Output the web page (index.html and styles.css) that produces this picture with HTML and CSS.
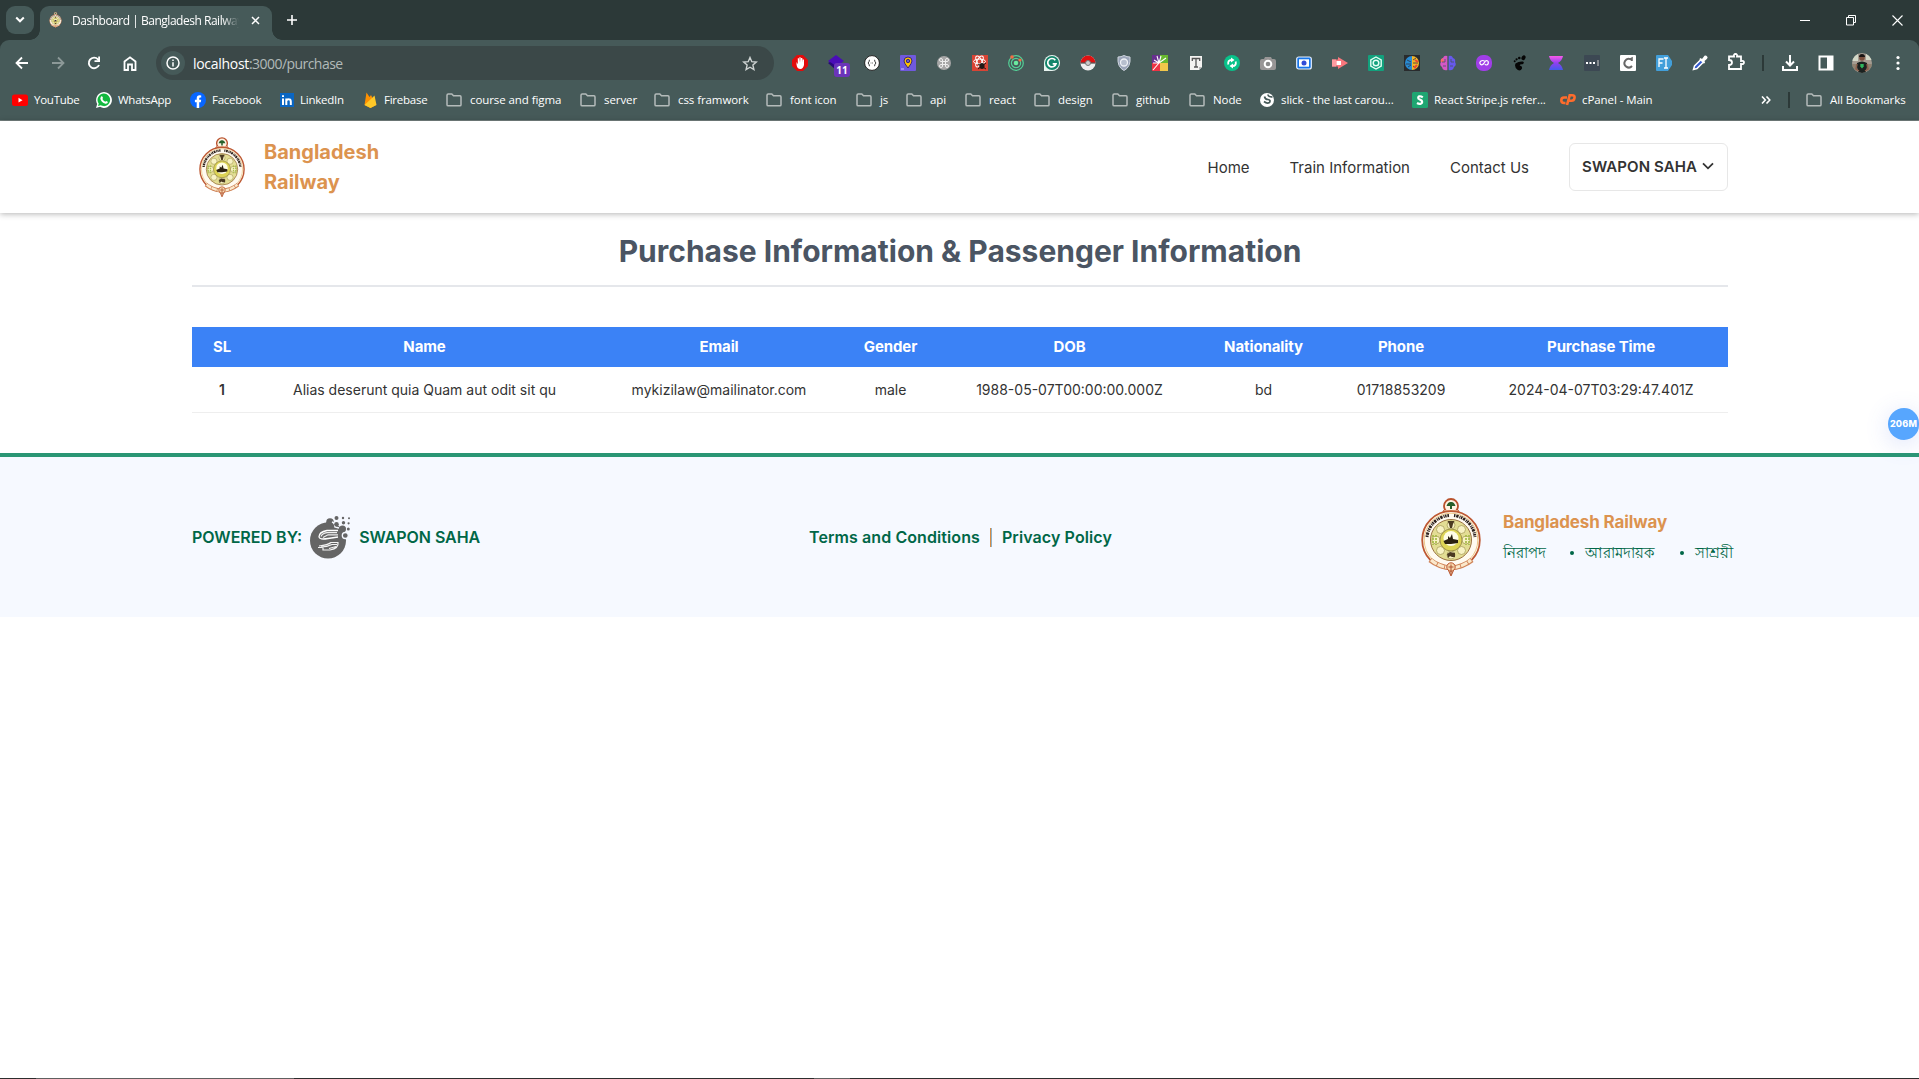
FILE: index.html
```html
<!DOCTYPE html>
<html lang="en">
<head>
<meta charset="utf-8">
<title>Dashboard | Bangladesh Railway</title>
<link rel="stylesheet" href="styles.css">
</head>
<body>
<svg class="defs" width="0" height="0" aria-hidden="true">
  <defs>
    <symbol id="folder" viewBox="0 0 16 14"><path d="M1 2.200Q1 1 2.200 1H5.800L7.500 2.800H14Q15 2.800 15 3.900V11.700Q15 12.800 14 12.800H2.100Q1 12.800 1 11.700Z" fill="none" stroke="#b4bbba" stroke-width="1.500"/></symbol>
    <symbol id="emblem" viewBox="0 0 60 78">
      <path d="M25 67L30 78L35 67Z" fill="#f3d3b5" stroke="#b9562f" stroke-width="1"/>
      <circle cx="30" cy="8" r="7" fill="#fff4e4" stroke="#b9522d" stroke-width="1.800"/>
      <path d="M23 12L20 17H40L37 12" fill="#e9b99a" stroke="#b9522d"/>
      <circle cx="30" cy="42" r="28.800" fill="#fffaf0" stroke="#bd5832" stroke-width="1.800"/>
      <circle cx="30" cy="42" r="26.800" fill="none" stroke="#e6bb70" stroke-width=".8"/>
      <path d="M6 39A24 24 0 0 1 28 17.500M33 17.500A24 24 0 0 1 54 39" fill="none" stroke="#2c211d" stroke-width="3" stroke-dasharray="1.500 .8 2.400 1 1 .6"/>
      <circle cx="30" cy="42" r="20.500" fill="#e3dd94" stroke="#9a7140" stroke-width="1"/>
      <g fill="#f8f2c4" stroke="#a99f5a" stroke-width=".8">
        <circle cx="30" cy="27" r="4"/><circle cx="40.500" cy="31.500" r="4"/><circle cx="45" cy="42" r="4"/><circle cx="40.500" cy="52.500" r="4"/><circle cx="30" cy="57" r="4"/><circle cx="19.500" cy="52.500" r="4"/><circle cx="15" cy="42" r="4"/><circle cx="19.500" cy="31.500" r="4"/>
      </g>
      <path d="M12 37V47M15 37V47M45 37V47M48 37V47" stroke="#a9bd4c" stroke-width="1.800" stroke-dasharray="2 1"/>
      <circle cx="30" cy="42" r="11" fill="#ddd455" stroke="#8f8146" stroke-width=".8"/>
      <circle cx="30" cy="40.500" r="7.500" fill="#fffde6"/>
      <path d="M22.500 43L27 41V38L29 40L31 36L32 41L37 42V45L30 46L24 46Z" fill="#2b2110"/>
      <path d="M26.500 23H33.500L32 26L31 30H29L28 26Z" fill="#4b3a22"/>
      <path d="M26 56L29 54L34 55V59H31L29 58L27 60Z" fill="#4b3a22"/>
      <path d="M25.500 8Q27 3.500 30 4Q33 3.500 34.500 8H31V11H29V8Z" fill="#27602b"/>
      <path d="M9 62Q18 69 30 70Q42 69 51 62" fill="none" stroke="#d08559" stroke-width="5"/>
      <path d="M10 62Q18 69 30 70Q42 69 50 62" fill="none" stroke="#fbe9cc" stroke-width="3" stroke-dasharray="7 1"/>
      <circle cx="30" cy="69" r="4.200" fill="#f8d9ae" stroke="#b9522d"/>
      <path d="M27.500 69H32.500M30 66.500V77" stroke="#ab512e"/>
    </symbol>
  </defs>
</svg>

<div class="browser">
  <div class="tabstrip">
    <button class="tab-search"><svg width="10" height="8" viewBox="0 0 10 8"><path d="M1.200 1.500L5 5.300L8.800 1.500" fill="none" stroke="#fff" stroke-width="2"/></svg></button>
    <div class="tab">
      <svg class="favicon" width="13" height="16"><use href="#emblem"/></svg>
      <span class="tab-title">Dashboard | Bangladesh Railway</span>
      <svg width="9" height="9" viewBox="0 0 9 9"><path d="M1 1L8 8M8 1L1 8" stroke="#fff" stroke-width="1.500"/></svg>
    </div>
    <svg class="new-tab" width="10" height="10" viewBox="0 0 10 10"><path d="M5 0V10M0 5H10" stroke="#fff" stroke-width="1.600"/></svg>
    <div class="window-controls">
      <svg width="10" height="11" viewBox="0 0 10 11"><path d="M0 5.500H10" stroke="#fff"/></svg>
      <svg width="10" height="11" viewBox="0 0 10 11"><path d="M.5 2.500H7.500V10H.5ZM2.500 2.500V.5H9.500V7.500H7.500" fill="none" stroke="#fff"/></svg>
      <svg width="11" height="11" viewBox="0 0 11 11"><path d="M.5 .5L10.500 10.500M10.500 .5L.5 10.500" stroke="#fff" stroke-width="1.100"/></svg>
    </div>
  </div>

  <div class="toolbar">
    <div class="nav-buttons">
      <svg width="14" height="14" viewBox="0 0 14 14"><path d="M13 7H2M7 1.500L1.500 7L7 12.500" fill="none" stroke="#fff" stroke-width="1.800"/></svg>
      <svg width="14" height="14" viewBox="0 0 14 14"><path d="M1 7H12M7 1.500L12.500 7L7 12.500" fill="none" stroke="#8c9998" stroke-width="1.800"/></svg>
      <svg width="14" height="14" viewBox="0 0 14 14"><path d="M12 9A5.300 5.300 0 1 1 11 3.300L12 4.500" fill="none" stroke="#fff" stroke-width="1.900"/><path d="M13 .5V6H7.500V4.200H11.200V.5Z" fill="#fff"/></svg>
      <svg width="14" height="15" viewBox="0 0 14 15"><path d="M1.500 14V5.500L7 1.300L12.500 5.500V14H9V8.500H5V14Z" fill="none" stroke="#fff" stroke-width="1.800"/></svg>
    </div>
    <div class="omnibox">
      <span class="site-info"><svg width="14" height="14" viewBox="0 0 14 14"><circle cx="7" cy="7" r="6" fill="none" stroke="#fff" stroke-width="1.500"/><path d="M7 6.300V10.500M7 3.400V5" stroke="#fff" stroke-width="1.500"/></svg></span>
      <span class="url"><b>localhost</b>:3000/purchase</span>
      <svg width="16" height="15" viewBox="0 0 16 15"><path d="M8 1.500L9.800 5.700L14.300 6.100L10.900 9.100L11.900 13.500L8 11.200L4.100 13.500L5.100 9.100L1.700 6.100L6.200 5.700Z" fill="none" stroke="#cfd4d3" stroke-width="1.400"/></svg>
    </div>
    <div class="extensions">
      <svg viewBox="0 0 16 16"><path d="M5 0H11L16 5V11L11 16H5L0 11V5Z" fill="#e30b0b"/><path d="M4.500 7V9.500Q5 14 8.500 14Q11 14 12 10V4.500H10.800V7.500L10.300 3H9V7.500L8.600 2.300H7.400V7.500L6.900 3.300H5.800V9.300Z" fill="#fff"/></svg>
      <span class="ext-badged"><svg viewBox="0 0 16 16"><path d="M8 0L16 6L8 12L0 6Z" fill="#4a0db8"/><path d="M0 8L2 7L8 11L8 15Z" fill="#27087a"/></svg><span class="badge">11</span></span>
      <svg viewBox="0 0 16 16"><circle cx="8" cy="8" r="7.400" fill="#fff" stroke="#222"/><path d="M6 5Q4.800 5 5 6.800L4 8L5 9.200Q4.800 11 6 11M10 5Q11.200 5 11 6.800L12 8L11 9.200Q11.200 11 10 11" fill="none" stroke="#222" stroke-width=".9"/><path d="M6.500 8H9.500" stroke="#777" stroke-dasharray="1 .5"/></svg>
      <svg viewBox="0 0 16 16"><rect width="16" height="16" rx="1" fill="#7059de"/><path d="M8 13Q4 8 4 6A4 4 0 0 1 12 6Q12 8 8 13Z" fill="#ffc400" stroke="#382879"/><circle cx="8" cy="6" r="1.700" fill="#6d59c0" stroke="#382879"/><path d="M1 14H4" stroke="#cbc3ff"/></svg>
      <svg viewBox="0 0 16 16"><circle cx="8" cy="8" r="7" fill="#a6a6a6"/><path d="M6.500 6.500H9.500V9.500H6.500ZM6.500 6.500H5A1.500 1.500 0 1 1 6.500 5ZM9.500 6.500V5A1.500 1.500 0 1 1 11 6.500ZM9.500 9.500H11A1.500 1.500 0 1 1 9.500 11ZM6.500 9.500V11A1.500 1.500 0 1 1 5 9.500Z" fill="none" stroke="#eee"/></svg>
      <svg viewBox="0 0 16 16"><rect width="16" height="16" fill="#d94435"/><g fill="none" stroke="#fff"><ellipse cx="7.500" cy="6.500" rx="6" ry="2.400"/><ellipse cx="7.500" cy="6.500" rx="6" ry="2.400" transform="rotate(60 7.500 6.500)"/><ellipse cx="7.500" cy="6.500" rx="6" ry="2.400" transform="rotate(120 7.500 6.500)"/></g><ellipse cx="10" cy="11" rx="2.600" ry="3" fill="#201816"/><path d="M6 9L14 14M6 14L14 8" stroke="#201816"/></svg>
      <svg viewBox="0 0 16 16"><g fill="none" stroke="#54cf96" stroke-width="1.200"><circle cx="8" cy="8" r="7.300"/><circle cx="8" cy="8" r="4.600"/></g><circle cx="8" cy="8" r="2.300" fill="#6bea9f"/><circle cx="4" cy="2" r="1.800" fill="#f36d45"/><circle cx="12" cy="5" r="1.600" fill="#f36d45"/></svg>
      <svg viewBox="0 0 16 16"><path d="M0 16V8A8 8 0 1 1 8 16Z" fill="#e8f4f0"/><circle cx="8" cy="8" r="7" fill="#13856b"/><path d="M11.300 5.200A4.200 4.200 0 1 0 12 8.800H8.700" fill="none" stroke="#fff" stroke-width="1.700"/></svg>
      <svg viewBox="0 0 16 16"><circle cx="8" cy="8" r="7.500" fill="#eee"/><path d="M.5 8A7.500 7.500 0 0 1 15.500 8Z" fill="#df1111"/><path d="M.5 8H15.500" stroke="#555" stroke-width="1.300"/><circle cx="8" cy="8" r="2.500" fill="#ccc" stroke="#777"/></svg>
      <svg viewBox="0 0 16 16"><path d="M8 .5Q11 2 14 2Q15 12 8 15.500Q1 12 2 2Q5 2 8 .5Z" fill="#9ba5b9" stroke="#cfd5df"/><circle cx="8" cy="7.500" r="3.500" fill="#b7bfce" stroke="#eef1f6" stroke-width="1.300"/></svg>
      <svg viewBox="0 0 16 16"><path d="M0 0H8V8H0Z" fill="#68308f"/><path d="M8 0H16V8H8Z" fill="#68b92f"/><path d="M0 8H8V16H0Z" fill="#ee3344"/><path d="M8 8H16V16H8Z" fill="#f1c74b"/><path d="M1 15L7 8L2 5M7 8L5 1M7 8L9 1M7 8L14 3M7 8H1" stroke="#fff" stroke-width="1.100" fill="none"/></svg>
      <svg viewBox="0 0 16 16"><path d="M2 1H14V12L11 15H2Z" fill="#f4f3f1"/><path d="M14 12H11V15Z" fill="#bbb"/><path d="M4.300 6V3.500H11.700V6M8 3.500V12M6 12H10" fill="none" stroke="#555" stroke-width="1.300"/></svg>
      <svg viewBox="0 0 16 16"><circle cx="8" cy="8" r="8" fill="#08c28a"/><path d="M4.300 9.500Q3.500 5 7.500 5M11.700 6.500Q12.500 11 8.500 11" fill="none" stroke="#fff" stroke-width="1.800"/><path d="M7 2.500L10.500 5L7 7.500ZM9 8.500L5.500 11L9 13.500Z" fill="#fff"/></svg>
      <svg viewBox="0 0 16 16"><path d="M5 2H11L12 4H14Q16 4 16 6V13Q16 15 14 15H2Q0 15 0 13V6Q0 4 2 4H4Z" fill="#989696"/><circle cx="8" cy="9" r="3.300" fill="#8a8a8a" stroke="#fff" stroke-width="2"/></svg>
      <svg viewBox="0 0 16 16"><rect x=".7" y="2" width="14.600" height="12" rx="2" fill="#1675e8" stroke="#e8f1ff" stroke-width="1.200"/><rect x="3" y="4.300" width="10" height="7.400" fill="#fff"/><circle cx="8" cy="8" r="2.500" fill="#304bd7"/></svg>
      <svg viewBox="0 0 16 16"><path d="M0 4.500H6V2L16 8L6 14V11.500H0Z" fill="#f9777d"/><path d="M0 4.500H4V11.500H0Z" fill="#ff9ba0"/><path d="M4.500 6H9V10H4.500Z" fill="#fff"/></svg>
      <svg viewBox="0 0 16 16"><rect width="16" height="16" rx="1" fill="#12a17d"/><path d="M8 2L13.200 5V11L8 14L2.800 11V5Z" fill="none" stroke="#e5fff4" stroke-width="1.400"/><circle cx="8" cy="8" r="2.800" fill="none" stroke="#e5fff4" stroke-width="1.500"/></svg>
      <svg viewBox="0 0 16 16"><rect width="16" height="16" fill="#292b2d"/><path d="M8 1A7 7 0 0 0 8 15Z" fill="#288bd2"/><path d="M8 1A7 7 0 0 1 8 15Z" fill="#f4b729"/><path d="M3 5L7 7M2 9H7M4 12L7 10M9 5L12 3M9 8H14M9 11L12 13" stroke="#2d3445" stroke-width=".8"/><path d="M11 5L14 7M10 13L13 10" stroke="#eb4934" stroke-width="2"/></svg>
      <svg viewBox="0 0 16 16"><path d="M7.300 1Q4 0 3 3Q0 4 1 7Q-1 10 2 12Q3 16 7.300 15Z" fill="#d657c6"/><path d="M3 3Q0 4 1 7L4 7Z" fill="#fb6b65"/><path d="M8.700 1Q12 0 13 3Q16 4 15 7Q17 10 14 12Q13 16 8.700 15Z" fill="#6659ec"/><path d="M2 7H5V4M3 11H6M14 7H11V4M13 11H10" fill="none" stroke="#47545f" stroke-width=".8"/></svg>
      <svg viewBox="0 0 16 16"><rect width="16" height="16" rx="7" fill="#a03ee8"/><path d="M8.500 6Q6.500 5 5 6Q3 7.500 4.500 9.300Q6.200 10.700 8 8.200L9.500 6Q11.500 5 12.300 7Q12.500 9.800 10.500 10Q9.500 10 8.800 9.200" fill="none" stroke="#fff" stroke-width="1.200"/></svg>
      <svg viewBox="0 0 16 16"><g fill="#050505"><ellipse cx="11.500" cy="2.700" rx="1.900" ry="2.500" transform="rotate(30 11.500 2.700)"/><circle cx="7.300" cy="3" r="1.300"/><circle cx="4.600" cy="4.300" r="1.100"/><circle cx="2.700" cy="6.300" r="1"/><path d="M3.500 8.500Q7 6 11 6.500Q13 8 10.500 9.300Q7.500 9 7.800 10.500Q10.500 11 10 13.500Q8.500 16.500 5.500 14.800Q2 12 3.500 8.500Z"/></g></svg>
      <svg viewBox="0 0 16 16"><defs><linearGradient id="hourglass" x2="0" y2="1"><stop stop-color="#f75bea"/><stop offset=".5" stop-color="#913ef0"/><stop offset="1" stop-color="#4359ec"/></linearGradient></defs><path d="M1 1H15Q14 6 10 8Q14 10 15 15H1Q2 10 6 8Q2 6 1 1Z" fill="url(#hourglass)"/></svg>
      <svg viewBox="0 0 16 16"><rect width="16" height="16" rx="1" fill="#3c4853"/><path d="M2 8H12" stroke="#fff" stroke-width="2" stroke-dasharray="2 1.500"/><path d="M14 5V11" stroke="#ccc"/></svg>
      <svg viewBox="0 0 16 16"><rect width="16" height="16" rx="1" fill="#fff"/><path d="M11.800 6V3.500L10.500 4.200A4.300 4.300 0 1 0 12 11" fill="none" stroke="#686868" stroke-width="2"/></svg>
      <svg viewBox="0 0 16 16"><path d="M1 0H12L16 6V10L12 16H1Q0 16 0 15V1Q0 0 1 0Z" fill="#429fda"/><path d="M3 12V4H7.500M3 8H6.500M8 3H12M10 3V13M8 13H12" fill="none" stroke="#fff" stroke-width="1.300"/></svg>
      <svg viewBox="0 0 16 16"><path d="M1.500 14.500L2.500 11L9 4.500L11.500 7L5 13.500Z" fill="#3359d0" stroke="#fff" stroke-width="1.500"/><path d="M8 3L10 4L12.500 .7Q14 0 15.500 2Q16 3.500 12.500 6L13 8L11.500 8.500L7.500 4.500Z" fill="#fff"/></svg>
      <svg viewBox="0 0 18 18"><path d="M2 3.500H7Q6.500 1 8.500 1Q10.500 1 10 3.500H14V8Q17 7.500 17 9.500Q17 11.500 14 11V16H2V12Q5 12 5 9.500Q5 7 2 7Z" fill="none" stroke="#fff" stroke-width="1.800"/></svg>
    </div>
    <span class="divider"></span>
    <div class="toolbar-end">
      <svg viewBox="0 0 16 16"><path d="M8 0V10M4 6.500L8 10.500L12 6.500M1 11V15H15V11" fill="none" stroke="#fff" stroke-width="2"/></svg>
      <svg viewBox="0 0 16 16"><rect x="1.500" y="1.500" width="13" height="13" fill="none" stroke="#fff" stroke-width="2"/><path d="M9 2H14V14H9Z" fill="#fff"/></svg>
      <svg class="avatar" viewBox="0 0 20 20"><defs><clipPath id="round"><circle cx="10" cy="10" r="10"/></clipPath></defs><g clip-path="url(#round)"><path d="M0 0H20V20H0Z" fill="#a59c91"/><path d="M0 0H6V8H0ZM14 0H20V7H14Z" fill="#d3d8c8"/><path d="M0 11H5V20H0ZM15 11H20V20H15Z" fill="#8f8170"/><path d="M5 10Q10 7 15 10V14L13.500 20H6.500L5 14Z" fill="#1b211f"/><path d="M5 11L4 16L7 18M15 11L16 16L13 18" fill="none" stroke="#8b5f4c" stroke-width="1.500"/><circle cx="10" cy="5" r="2.800" fill="#7b4f3c"/><path d="M7 4Q7 1 10 1Q13 1 13 4Z" fill="#191514"/><path d="M8.300 11H11.700V13.500L10 15.500L8.300 13.500Z" fill="#2fb65d"/></g></svg>
      <svg viewBox="0 0 16 16"><g fill="#fff"><circle cx="8" cy="2.500" r="1.600"/><circle cx="8" cy="8" r="1.600"/><circle cx="8" cy="13.500" r="1.600"/></g></svg>
    </div>
  </div>

  <div class="bookmarks">
    <a><svg viewBox="0 0 16 16"><rect y="2.500" width="16" height="11.500" rx="2.500" fill="#f00"/><path d="M6.500 5.800L10.500 8.200L6.500 10.600Z" fill="#fff"/></svg><span>YouTube</span></a>
    <a><svg viewBox="0 0 16 16"><path d="M0 16L1.200 12A7.900 7.900 0 1 1 4 14.800Z" fill="#fff"/><path d="M2 14L2.700 11.500A6.300 6.300 0 1 1 4.700 13.300Z" fill="#12b83e"/><path d="M5 4.500Q6.500 3.500 7 6L6.400 7Q7.500 9 9.300 9.700L10.200 8.900L12 10Q11.500 12 9.500 11.800Q5 10.500 4.300 6.500Z" fill="#fff"/></svg><span>WhatsApp</span></a>
    <a><svg viewBox="0 0 16 16"><circle cx="8" cy="8" r="8" fill="#0866ff"/><path d="M6.700 16V10.300H4.900V7.800H6.700V6.500Q6.700 3.200 9.700 3.200L11.200 3.400V5.500H10.200Q9.200 5.500 9.200 6.600V7.800H11.200L10.800 10.300H9.200V16Z" fill="#fff"/></svg><span>Facebook</span></a>
    <a><svg viewBox="0 0 16 16"><rect x="0" y="1" width="14" height="14" fill="#0a66c2"/><path d="M3 6.500V13M3 3.300V5.100M6.300 13V6.500M6.300 9Q7 7.200 8.700 7.300Q10.800 7.300 10.800 9.700V13" stroke="#fff" stroke-width="2" fill="none"/></svg><span>LinkedIn</span></a>
    <a><svg viewBox="0 0 16 16"><path d="M.5 13L2.500 .5L5.500 5L7 3L12 13L6.500 16Z" fill="#ff9100"/><path d="M.5 13L8 6L10.500 3.500L12.500 13L6.500 16Z" fill="#ffc928"/></svg><span>Firebase</span></a>
    <a><svg><use href="#folder"/></svg><span>course and figma</span></a>
    <a><svg><use href="#folder"/></svg><span>server</span></a>
    <a><svg><use href="#folder"/></svg><span>css framwork</span></a>
    <a><svg><use href="#folder"/></svg><span>font icon</span></a>
    <a><svg><use href="#folder"/></svg><span>js</span></a>
    <a><svg><use href="#folder"/></svg><span>api</span></a>
    <a><svg><use href="#folder"/></svg><span>react</span></a>
    <a><svg><use href="#folder"/></svg><span>design</span></a>
    <a><svg><use href="#folder"/></svg><span>github</span></a>
    <a><svg><use href="#folder"/></svg><span>Node</span></a>
    <a><svg viewBox="0 0 16 16"><circle cx="7" cy="8" r="7" fill="#fff"/><path d="M4.500 4.500Q5 7.500 8 7.500Q11 8 9.500 10.500Q7 12 4 9.500M8 2.500Q8 5 12.500 5" fill="none" stroke="#465a59" stroke-width="1.700"/></svg><span>slick - the last carou...</span></a>
    <a><svg viewBox="0 0 16 16"><rect width="16" height="16" rx="1.500" fill="#1fa672"/><path d="M10.800 5.300Q9 4 7.200 4.300Q5.700 5 6.500 6.600Q8 7.500 9.500 8.500Q11 10.500 9 11.600Q7 12.200 5 11" fill="none" stroke="#fff" stroke-width="2.200"/></svg><span>React Stripe.js refer...</span></a>
    <a><svg viewBox="0 0 16 16"><path d="M7 5.500H4Q1.300 5.500 1.300 8.300Q1.300 11 4 11H5.500M7 13L9.700 3.300H12Q15 3.300 14.500 6Q14 8.800 11.500 8.800H9" fill="none" stroke="#ff6c2c" stroke-width="2.600"/></svg><span>cPanel - Main</span></a>
    <svg class="more" viewBox="0 0 10 8"><path d="M1 .5L4.300 4L1 7.500M5.500 .5L8.800 4L5.500 7.500" fill="none" stroke="#fff" stroke-width="1.600"/></svg>
    <i class="divider"></i>
    <a><svg><use href="#folder"/></svg><span>All Bookmarks</span></a>
  </div>
</div>

<div class="page">
  <header class="site-header">
    <div class="container header-row">
      <a class="brand"><svg width="46" height="60"><use href="#emblem"/></svg><span>Bangladesh<br>Railway</span></a>
      <nav class="site-nav">
        <a>Home</a><a>Train Information</a><a>Contact Us</a>
        <button class="user-menu"><span>SWAPON SAHA</span><svg width="12" height="8" viewBox="0 0 12 8"><path d="M1 1.300L6 6.300L11 1.300" fill="none" stroke="#333" stroke-width="1.800"/></svg></button>
      </nav>
    </div>
  </header>

  <main class="container">
    <h1>Purchase Information &amp; Passenger Information</h1>
    <table>
      <colgroup><col class="c-sl"><col class="c-name"><col class="c-email"><col class="c-gender"><col class="c-dob"><col class="c-nat"><col class="c-phone"><col class="c-time"></colgroup>
      <thead><tr><th>SL</th><th>Name</th><th>Email</th><th>Gender</th><th>DOB</th><th>Nationality</th><th>Phone</th><th>Purchase Time</th></tr></thead>
      <tbody><tr><th>1</th><td>Alias deserunt quia Quam aut odit sit qu</td><td>mykizilaw@mailinator.com</td><td>male</td><td>1988-05-07T00:00:00.000Z</td><td>bd</td><td>01718853209</td><td>2024-04-07T03:29:47.401Z</td></tr></tbody>
    </table>
  </main>

  <footer class="site-footer">
    <div class="container footer-row">
      <div class="powered"><span>POWERED BY:</span>
        <svg width="41" height="43" viewBox="0 0 41 43"><g fill="#656565"><circle cx="18" cy="24.500" r="18"/><circle cx="20" cy="6" r="3.800"/><path d="M14 8L20 4L27 14L34 12L36 20L30 22Z"/><circle cx="32.500" cy="13" r="3.500"/></g><path d="M22 6Q25 7 25 11L29 12" stroke="#f6f9ff" stroke-width="1.500" fill="none"/><g fill="#656565"><circle cx="26.500" cy="2" r="2"/><circle cx="26.500" cy="8.200" r="2.300"/><circle cx="33" cy="2" r="1.200"/><circle cx="39" cy="2.300" r="1"/><circle cx="33.500" cy="6.800" r="1.700"/><circle cx="38.600" cy="7.300" r="1.100"/><circle cx="38.300" cy="13" r="1.500"/></g><circle cx="35.300" cy="19.500" r="3" fill="#656565" stroke="#f6f9ff" stroke-width="1.300"/><path d="M28 14.500H17Q9 16 9 21Q9.500 24 18 22.500L28 21" fill="none" stroke="#fff" stroke-width="1.400"/><path d="M27 16.700H17Q12 17.500 11 20.500M28 18.800H18L13 21.500" fill="none" stroke="#eee" stroke-width="1.200"/><path d="M9 30Q18 29 21 26.500H28Q29 32 20 34H13V31.500H8M27 28.500H22Q17 31 11 31M26 30.500L19 32.500" fill="none" stroke="#f3f3f3" stroke-width="1.200"/></svg>
        <span>SWAPON SAHA</span></div>
      <div class="legal"><a>Terms and Conditions</a><i></i><a>Privacy Policy</a></div>
      <div class="footer-brand">
        <svg width="60" height="78"><use href="#emblem"/></svg>
        <div><strong>Bangladesh Railway</strong>
          <ul><li>নিরাপদ</li><li>আরামদায়ক</li><li>সাশ্রয়ী</li></ul></div>
      </div>
    </div>
  </footer>
</div>
<div class="memory">206M</div>
<div class="taskbar"><i></i><i></i></div>
</body>
</html>
```
FILE: styles.css
```css
* { box-sizing: border-box; }
body { margin: 0; height: 1079px; overflow: hidden; background: #fff; color: #333; font-family: Inter, "Liberation Sans", sans-serif; position: relative; }
button { font: inherit; background: none; border: 0; padding: 0; }
svg { display: block; flex: none; }
.defs { position: absolute; }

.browser { height: 121px; background: #2c3938; border-bottom: 1px solid #74807f; font-family: "Open Sans", "Noto Sans", sans-serif; color: #fff; }
.tabstrip { height: 40px; display: flex; align-items: center; padding-left: 6px; }
.tab-search { width: 28px; height: 28px; border-radius: 9px; background: #465a59; display: grid; place-items: center; }
.tab { position: relative; width: 232px; height: 34px; margin: 6px 0 0 6px; border-radius: 9px 9px 0 0; background: #465a59; display: flex; align-items: center; padding: 0 12px 6px 9px; }
.tab::before, .tab::after { content: ""; position: absolute; bottom: 0; width: 10px; height: 10px; }
.tab::before { left: -10px; background: radial-gradient(circle at 0 0, transparent 9.5px, #465a59 10px); }
.tab::after { right: -10px; background: radial-gradient(circle at 100% 0, transparent 9.5px, #465a59 10px); }
.favicon { margin-right: 10px; }
.tab-title { flex: 1; margin-right: 12px; overflow: hidden; white-space: nowrap; font-size: 12px; letter-spacing: -.48px; mask-image: linear-gradient(90deg, #000 90%, transparent); }
.new-tab { margin-left: 15px; }
.window-controls { margin-left: auto; display: flex; gap: 36px; padding-right: 16px; }
.toolbar { height: 46px; background: #465a59; border-radius: 9px 9px 0 0; display: flex; align-items: center; padding-left: 15px; }
.nav-buttons { display: flex; gap: 22px; align-items: center; width: 141px; }
.omnibox { width: 618px; height: 34px; border-radius: 17px; background: #3b4848; display: flex; align-items: center; padding: 0 16px 0 5px; }
.site-info { width: 24px; height: 24px; border-radius: 50%; background: #465a59; display: grid; place-items: center; }
.url { flex: 1; margin-left: 8px; font-size: 14px; letter-spacing: -.55px; color: #b2bab9; }
.url b { font-weight: 400; letter-spacing: -.3px; color: #fff; }
.extensions { display: flex; gap: 20px; margin-left: 18px; align-items: center; }
.extensions svg, .toolbar-end svg { width: 16px; height: 16px; }
.extensions > svg:last-child { width: 18px; height: 18px; margin: -2px -1px 0; }
.ext-badged { position: relative; width: 16px; height: 16px; }
.badge { position: absolute; left: 6px; top: 8px; width: 16px; height: 14px; border-radius: 3px; background: #6b34b9; font: 700 10px/14px "Open Sans", sans-serif; text-align: center; }
.divider { width: 2px; height: 16px; background: #2c3938; }
.toolbar > .divider { margin-left: 18px; }
.toolbar-end { display: flex; align-items: center; gap: 20px; margin-left: 18px; }
.toolbar-end .avatar { width: 20px; height: 20px; margin: 0 -2px; }
.bookmarks { height: 34px; background: #465a59; padding: 0 0 6px 12px; display: grid; align-items: center; grid-template-columns: 84px 94px 90px 84px 82px 134px 74px 112px 90px 50px 59px 69px 78px 77px 71px 152px 148px 201px 27px 18px 110px; font-size: 11.500px; letter-spacing: -.08px; white-space: nowrap; }
.bookmarks a { display: flex; align-items: center; }
.bookmarks a:nth-child(-n+5) { letter-spacing: -.25px; }
.bookmarks a span { padding-bottom: 2px; }
.bookmarks a svg { width: 16px; height: 16px; margin-right: 6px; }
.bookmarks a:nth-child(4) svg, .bookmarks a:nth-child(5) svg { margin-right: 4px; }
.bookmarks a svg:has(use) { height: 14px; margin-right: 8px; }
.bookmarks a:nth-child(16) svg { margin-right: 5px; }
.bookmarks .more { width: 10px; height: 8px; }

.container { width: 1536px; margin-left: calc((100% - 1535px) / 2); }
.site-header { height: 92px; box-shadow: 0 1px 6px rgba(0,0,0,.3); }
.header-row { height: 92px; display: flex; justify-content: space-between; align-items: center; }
.brand { display: flex; align-items: center; gap: 19px; padding-left: 7px; color: #dc934f; font-weight: 700; font-size: 20px; line-height: 30px; }
.site-nav { display: flex; align-items: center; gap: 40px; font-size: 15px; }
.user-menu { width: 159px; height: 48px; border: 1px solid #e7e7e7; border-radius: 6px; display: flex; align-items: center; justify-content: center; gap: 5px; padding: 0 1px 2px 0; font-weight: 600; letter-spacing: .08px; color: #333; }
h1 { margin: 0; height: 74px; padding-top: 16px; border-bottom: 2px solid #e5e7eb; text-align: center; font-size: 30px; line-height: 44px; font-weight: 700; color: #4b5563; }
table { margin-top: 40px; width: 1536px; table-layout: fixed; border-spacing: 0; font-size: 14px; color: #333; text-align: center; }
th, td { padding: 0 0 0 1px; }
thead th { height: 40px; padding-bottom: 2px; background: #3b82f6; color: #fff; font-size: 15px; font-weight: 700; letter-spacing: -.1px; }
tbody th, tbody td { height: 46px; border-bottom: 1px solid #eee; }
tbody th { font-weight: 600; }
.c-sl { width: 59px; } .c-name { width: 346px; } .c-email { width: 243px; } .c-gender { width: 100px; }
.c-dob { width: 258px; } .c-nat { width: 130px; } .c-phone { width: 145px; } .c-time { width: 255px; }

.site-footer { margin-top: 40px; height: 164px; border-top: 4px solid #2a9674; background: #f6f9ff; color: #006747; }
.footer-row { height: 160px; display: grid; grid-template-columns: 617px 612px 307px; align-items: center; font-size: 16px; font-weight: 600; }
.powered { display: flex; align-items: center; gap: 8px; }
.powered span:last-child { letter-spacing: -.05px; }
.legal { display: flex; align-items: center; gap: 10px; letter-spacing: .09px; }
.legal i { width: 2px; height: 19px; background: linear-gradient(90deg, #d58b45 50%, #8fb4cc 50%); }
.footer-brand { display: flex; align-items: center; gap: 22px; }
.footer-brand strong { display: block; color: #dc934f; font-size: 17px; letter-spacing: -.12px; line-height: 28px; font-weight: 700; padding-top: 3px; }
ul { list-style: none; margin: 0; padding: 1px 0 0; display: flex; font-size: 14.800px; font-weight: 400; line-height: 32px; }
li:first-child { width: 42px; }
li + li { display: flex; align-items: center; white-space: nowrap; }
li + li::before { content: ""; width: 4px; height: 4px; border-radius: 50%; background: #006747; margin: 0 11px 0 25px; }
.memory { position: absolute; right: 0; top: 408px; width: 31px; height: 32px; border-radius: 16px 15px 15px 16px; background: #57a6fe; color: #fff; text-align: center; font: 800 9px/32px Inter, sans-serif; letter-spacing: .2px; box-shadow: 0 4px 24px rgba(80,110,230,.2); }
.taskbar { position: absolute; left: 0; right: 0; bottom: 0; height: 1px; background: #2d2d2d; display: flex; }
.taskbar i { width: 258px; margin-left: 36px; background: #606060; }
.taskbar i + i { width: 36px; margin-left: 520px; }
```
